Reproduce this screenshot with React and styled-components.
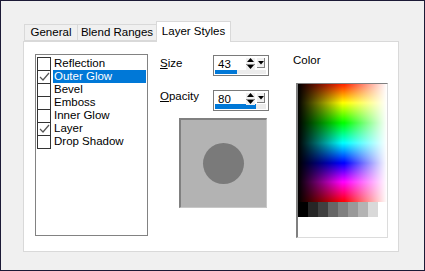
import React from 'react';
import styled, { createGlobalStyle } from 'styled-components';

const GlobalStyle = createGlobalStyle`
  html, body {
    margin: 0;
    padding: 0;
    background: #f0f0f0;
  }
  * {
    box-sizing: border-box;
  }
`;

const Window = styled.div`
  width: 425px;
  height: 271px;
  border: 1px solid #1c1a36;
  background: #f0f0f0;
  padding: 19px 25px 18px 22px;
  display: flex;
  flex-direction: column;
  font-family: "Liberation Sans", Arial, sans-serif;
  font-size: 11.5px;
  line-height: 13px;
  color: #000;
`;

const TabStrip = styled.div`
  display: flex;
  align-items: flex-end;
  height: 21px;
  padding-left: 1px;
  position: relative;
  z-index: 1;
`;

const Tab = styled.div`
  height: ${(p) => (p.$active ? '21px' : '17px')};
  width: ${(p) => p.$w}px;
  margin-bottom: ${(p) => (p.$active ? '-1px' : '0')};
  background: ${(p) => (p.$active ? '#fff' : '#f0f0f0')};
  border: 1px solid #d9d9d9;
  border-bottom: ${(p) => (p.$active ? 'none' : '1px solid #d9d9d9')};
  margin-right: -1px;
  display: flex;
  align-items: center;
  justify-content: center;
  padding-bottom: ${(p) => (p.$active ? '2px' : '0')};
`;

const Panel = styled.div`
  flex: 1;
  background: #fff;
  border: 1px solid #d9d9d9;
  display: flex;
  padding: 12px 0 0 11px;
`;

const ListBox = styled.div`
  width: 113px;
  height: 182px;
  border: 1px solid #828282;
  padding: 2px 0 0 1px;
  display: flex;
  flex-direction: column;
`;

const Row = styled.div`
  display: flex;
  align-items: stretch;
  height: 13px;
`;

const Box = styled.div`
  width: 14px;
  height: 14px;
  margin-bottom: -1px;
  border: 1px solid #333;
  background: #fff;
  display: flex;
  align-items: center;
  justify-content: center;
`;

const ItemLabel = styled.div`
  flex: 1;
  margin-left: 2px;
  margin-right: 1px;
  padding-left: 1px;
  display: flex;
  align-items: center;
  background: ${(p) => (p.$selected ? '#0078d7' : 'transparent')};
  color: ${(p) => (p.$selected ? '#fff' : '#000')};
  white-space: nowrap;
`;

const Middle = styled.div`
  width: 110px;
  margin-left: 12px;
  padding-top: 1px;
  display: flex;
  flex-direction: column;
`;

const FieldRow = styled.div`
  display: flex;
  align-items: flex-start;
  height: 21px;
  margin-bottom: ${(p) => p.$gap}px;
`;

const FieldLabel = styled.div`
  width: 53px;
  padding-top: ${(p) => p.$top}px;
  u {
    text-decoration: underline;
    text-underline-offset: 1px;
  }
`;

const SpinBox = styled.div`
  position: relative;
  width: 56px;
  height: 21px;
  border: 1px solid #7a7a7a;
  background: #fff;
  padding: 2px 0 0 4px;
  line-height: 12px;
`;

const Track = styled.div`
  position: absolute;
  left: 1px;
  right: 2px;
  bottom: ${(p) => p.$b}px;
  height: ${(p) => p.$h}px;
  background: #ececec;
`;

const Fill = styled.div`
  height: 100%;
  background: #0078d7;
`;

const Spinner = styled.div`
  position: absolute;
  top: 2px;
  right: 13px;
  width: 9px;
  height: 12px;
  display: flex;
  flex-direction: column;
  justify-content: space-between;
  align-items: center;
  background: #f0f0f0;
`;

const Divider = styled.div`
  width: 9px;
  height: 1px;
  background: #888;
`;

const DropBtn = styled.div`
  position: absolute;
  top: 2px;
  right: 3px;
  width: 8px;
  height: 10px;
  background: #f0f0f0;
  border-right: 1px solid #808080;
  border-bottom: 1px solid #808080;
  display: flex;
  align-items: center;
  justify-content: center;
`;

const Preview = styled.div`
  margin-left: 19px;
  width: 88px;
  height: 90px;
  background: #b3b3b3;
  border-top: 2px solid #808080;
  border-left: 2px solid #808080;
  border-right: 1px solid #c8c8c8;
  border-bottom: 1px solid #c8c8c8;
  display: flex;
  align-items: center;
  justify-content: center;
`;

const Dot = styled.div`
  width: 41px;
  height: 41px;
  border-radius: 50%;
  background: #7a7a7a;
`;

const ColorCol = styled.div`
  margin-left: 23px;
  display: flex;
  flex-direction: column;
`;

const ColorLabel = styled.div`
  height: 13px;
`;

const ColorBox = styled.div`
  margin-top: 16px;
  margin-left: 3px;
  width: 92px;
  height: 155px;
  border-top: 1px solid #808080;
  border-left: 2px solid #808080;
  border-right: 1px solid #dcdcdc;
  border-bottom: 1px solid #dcdcdc;
  background: #fff;
  display: flex;
  flex-direction: column;
`;

const Spectrum = styled.div`
  height: 118px;
  background:
    linear-gradient(to right, #000 0%, rgba(0, 0, 0, 0) 50%, rgba(255, 255, 255, 0) 52%, #fff 100%),
    linear-gradient(to bottom, #ff2000 0%, #ffff00 16%, #00ff00 33%, #00ffff 50%, #0000ff 67%, #ff00ff 83%, #ff0000 100%);
`;

const Grays = styled.div`
  display: flex;
  height: 15px;
`;

const Swatch = styled.div`
  width: 10px;
  background: ${(p) => p.$c};
`;

const Check = () => (
  <svg width="11" height="10" viewBox="0 0 11 10">
    <polyline points="1,5 4,8 10,1" fill="none" stroke="#555" strokeWidth="1.2" />
  </svg>
);

const items = [
  { label: 'Reflection', checked: false },
  { label: 'Outer Glow', checked: true, selected: true },
  { label: 'Bevel', checked: false },
  { label: 'Emboss', checked: false },
  { label: 'Inner Glow', checked: false },
  { label: 'Layer', checked: true },
  { label: 'Drop Shadow', checked: false },
];

const grays = ['#000', '#262626', '#404040', '#666', '#808080', '#999', '#b3b3b3', '#d9d9d9'];

const Field = ({ label, accel, value, pct, barH, barB, labelTop, gap }) => (
  <FieldRow $gap={gap}>
    <FieldLabel $top={labelTop}>
      <u>{accel}</u>
      {label}
    </FieldLabel>
    <SpinBox>
      {value}
      <Track $h={barH} $b={barB}>
        <Fill style={{ width: `${pct}%` }} />
      </Track>
      <Spinner>
        <svg width="7" height="5" viewBox="0 0 7 5">
          <polygon points="0,4 3.5,0 7,4" fill="#000" />
        </svg>
        <Divider />
        <svg width="7" height="5" viewBox="0 0 7 5">
          <polygon points="0,0 7,0 3.5,4" fill="#000" />
        </svg>
      </Spinner>
      <DropBtn>
        <svg width="6" height="4" viewBox="0 0 6 4">
          <polygon points="0,0 6,0 3,3.5" fill="#000" />
        </svg>
      </DropBtn>
    </SpinBox>
  </FieldRow>
);

export default function App() {
  return (
    <>
      <GlobalStyle />
      <Window>
        <TabStrip>
          <Tab $w={54}>General</Tab>
          <Tab $w={80}>Blend Ranges</Tab>
          <Tab $w={75} $active>Layer Styles</Tab>
        </TabStrip>
        <Panel>
          <ListBox>
            {items.map((it) => (
              <Row key={it.label}>
                <Box>{it.checked && <Check />}</Box>
                <ItemLabel $selected={it.selected}>{it.label}</ItemLabel>
              </Row>
            ))}
          </ListBox>
          <Middle>
            <Field accel="S" label="ize" value="43" pct={43} barH={4} barB={1} labelTop={2} gap={14} />
            <Field accel="O" label="pacity" value="80" pct={80} barH={5} barB={1} labelTop={0} gap={7} />
            <Preview>
              <Dot />
            </Preview>
          </Middle>
          <ColorCol>
            <ColorLabel>Color</ColorLabel>
            <ColorBox>
              <Spectrum />
              <Grays>
                {grays.map((c) => (
                  <Swatch key={c} $c={c} />
                ))}
              </Grays>
            </ColorBox>
          </ColorCol>
        </Panel>
      </Window>
    </>
  );
}
